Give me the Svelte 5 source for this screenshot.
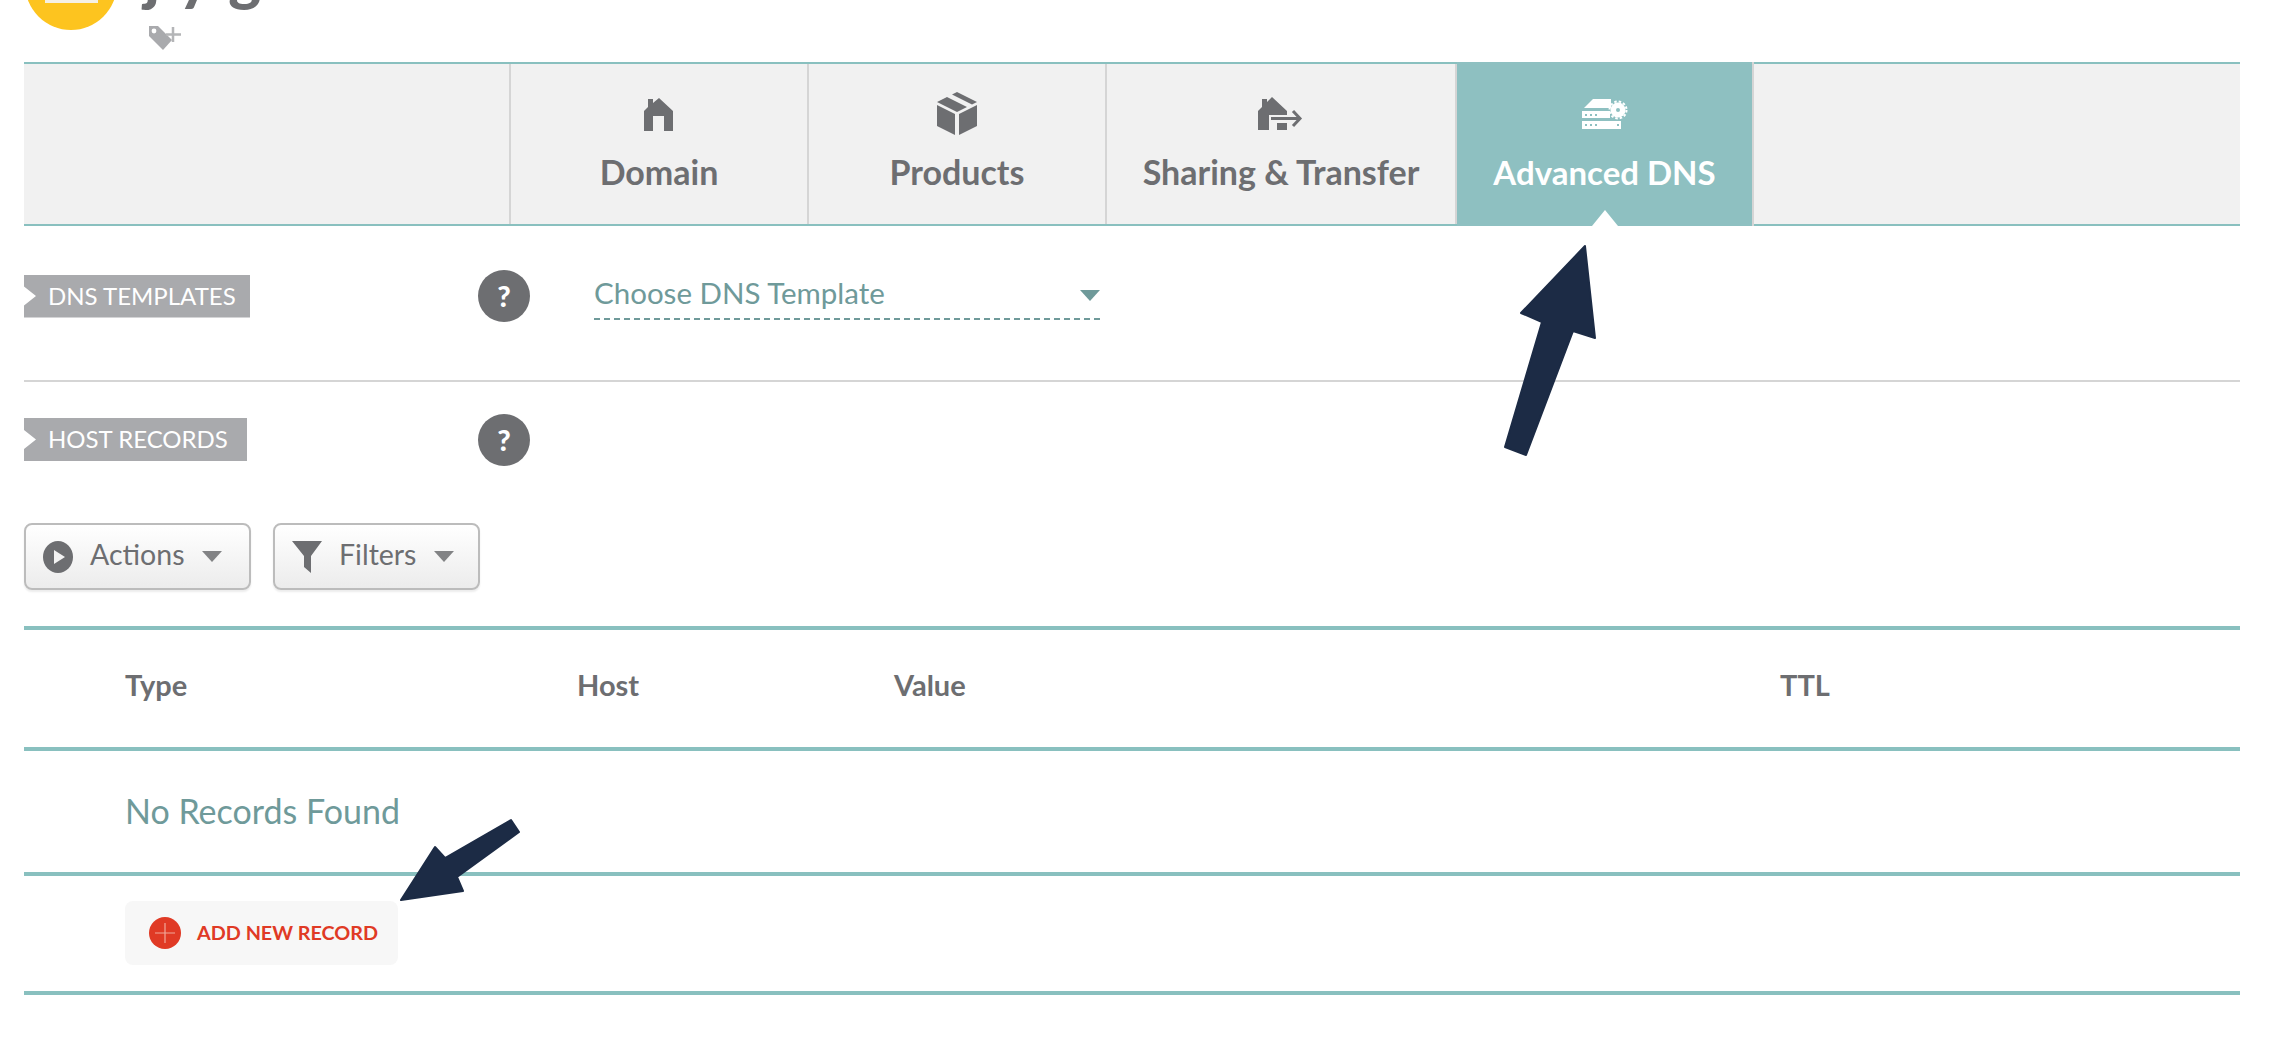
<script lang="ts">
	const tabs = [
		{ label: 'Domain', icon: 'home' },
		{ label: 'Products', icon: 'box' },
		{ label: 'Sharing & Transfer', icon: 'share' },
		{ label: 'Advanced DNS', icon: 'dns', active: true }
	];
	const columns = ['Type', 'Host', 'Value', 'TTL'];
</script>

<div class="page">
	<header class="head">
		<div class="avatar"><span class="avatar-bar"></span></div>
		<div class="title">jyg</div>
		<svg class="tag" viewBox="0 0 34 26" width="34" height="26">
			<path d="M1 1h9l14 14-9 10L1 11z" fill="#a9aaad" />
			<circle cx="6" cy="6" r="2.4" fill="#fff" />
			<path d="M25 2v15M18 9.500h15" stroke="#b4b5b7" stroke-width="2.500" fill="none" />
		</svg>
	</header>

	<nav class="tabs">
		<div class="tabs-spacer"></div>
		{#each tabs as tab}
			<div class="tab" class:active={tab.active}>
				<svg class="tab-icon" viewBox="0 0 48 40" width="48" height="40">
					{#if tab.icon === 'home'}
						<path d="M24 4L38 17V37H29V22H18V37H9V17L13 13V5H18V9z" />
					{:else if tab.icon === 'box'}
						<path d="M24-2L44 8 39 10.500 19 .5zM14 3L34 13 24 18 4 8zM4 11L22 20V41L4 32zM26 20L44 11V32L26 41z" />
					{:else if tab.icon === 'share'}
						<path d="M15 3L30 17V21H12V36H1V17L5 13V5H10V8zM20 29H30V36H20z" />
						<path d="M14 24.500H42M36 17L43 24.500 36 32" class="stroked" />
					{:else}
						<g transform="translate(1,5)">
							<path d="M11 0H29V9H2z" />
							<circle cx="36" cy="11" r="7.500" />
							<circle cx="36" cy="11" r="8.500" class="teeth" />
							<circle cx="36" cy="11" r="2" class="hole" />
							<path d="M0 12H28V19H0zM0 22H39V30H0z" />
							<path d="M3 15h2v2H3zM8 15h2v2H8zM13 15h2v2H13zM3 25h2v2H3zM8 25h2v2H8zM13 25h2v2H13zM35 25h2v2H35z" class="hole" />
						</g>
					{/if}
				</svg>
				<span>{tab.label}</span>
			</div>
		{/each}
	</nav>

	<section class="row dns-row">
		<div class="ribbon wide">DNS TEMPLATES</div>
		<div class="help">?</div>
		<div class="select">
			<span>Choose DNS Template</span>
			<i class="caret teal"></i>
		</div>
	</section>

	<section class="row host-row">
		<div class="ribbon">HOST RECORDS</div>
		<div class="help">?</div>
	</section>

	<div class="buttons">
		<button class="btn actions">
			<svg viewBox="0 0 30 32" width="30" height="32">
				<ellipse cx="15" cy="16" rx="15" ry="16" fill="#6d6e71" />
				<path d="M11 9l11 7-11 7z" fill="#f3f3f3" />
			</svg>
			<span>Actions</span>
			<i class="caret"></i>
		</button>
		<button class="btn filters">
			<svg viewBox="0 0 30 32" width="30" height="32">
				<path d="M0 0h30L19 15v17l-7-6V15z" fill="#6d6e71" />
			</svg>
			<span>Filters</span>
			<i class="caret"></i>
		</button>
	</div>

	<div class="table">
		<div class="thead">
			{#each columns as col}
				<div>{col}</div>
			{/each}
		</div>
		<div class="empty">No Records Found</div>
		<div class="add-row">
			<button class="add">
				<span class="plus">
					<svg viewBox="0 0 20 20" width="20" height="20">
						<path d="M10 0v20M0 10h20" stroke="#f0a79a" stroke-width="1.200" />
					</svg>
				</span>
				<span class="add-label">ADD NEW RECORD</span>
			</button>
		</div>
	</div>

	<!-- annotation arrows drawn over the screenshot -->
	<svg class="arrows" viewBox="0 0 2278 1052" width="2278" height="1052">
		<path
			d="M1585 246L1595 338 1573 331 1526 455 1505 447 1542 322 1521 313z"
			fill="#1c2b45" stroke="#1c2b45" stroke-width="2" stroke-linejoin="round"
		/>
		<path
			d="M401 900L435 847 445 858 511 820 519 832 457 877 463 891z"
			fill="#1c2b45" stroke="#1c2b45" stroke-width="2" stroke-linejoin="round"
		/>
	</svg>
</div>

<style>
	:global(body) {
		margin: 0;
		background: #fff;
	}

	.page {
		position: relative;
		width: 2278px;
		height: 1052px;
		overflow: hidden;
		box-sizing: border-box;
		padding: 0 38px 0 24px;
		font-family: Lato, 'Open Sans', sans-serif;
		color: #6d6e71;
	}

	.head {
		position: relative;
		height: 62px;
	}

	.avatar {
		position: absolute;
		left: 1px;
		top: -62px;
		width: 92px;
		height: 92px;
		border-radius: 50%;
		background: #fdc41f;
		display: flex;
		justify-content: center;
		align-items: flex-end;
	}

	.avatar-bar {
		width: 53px;
		height: 5px;
		margin-bottom: 27px;
		background: #f5f0e4;
	}

	.title {
		position: absolute;
		left: 120px;
		top: -46px;
		font-size: 62px;
		font-weight: 900;
		line-height: 42px;
		letter-spacing: 18px;
		color: #6d6e71;
	}

	.tag {
		position: absolute;
		left: 124px;
		top: 25px;
	}

	.tabs {
		display: flex;
		height: 164px;
		box-sizing: border-box;
		border-top: 2px solid #89c0bf;
		border-bottom: 2px solid #89c0bf;
		background: #f1f1f1;
	}

	.tabs-spacer {
		width: 485px;
		border-right: 2px solid #d5d5d5;
	}

	.tab {
		position: relative;
		display: flex;
		flex-direction: column;
		align-items: center;
		padding: 30px 0 0;
		box-sizing: border-box;
		border-right: 2px solid #d5d5d5;
		font-size: 34px;
		font-weight: 700;
		white-space: nowrap;
	}

	.tab:nth-child(2),
	.tab:nth-child(3) {
		width: 298px;
	}

	.tab:nth-child(4) {
		width: 350px;
	}

	.tab span {
		margin-top: 18px;
		line-height: 40px;
	}

	.tab-icon {
		flex: none;
		overflow: visible;
		fill: #6d6e71;
	}

	.tab-icon .stroked {
		fill: none;
		stroke: #6d6e71;
		stroke-width: 3;
	}

	.tab.active {
		width: 297px;
		margin-top: -2px;
		margin-bottom: -2px;
		padding-top: 32px;
		background: #8ec0c1;
		color: #fff;
		font-size: 33px;
	}

	.tab.active .tab-icon {
		fill: #fff;
	}

	.tab.active .tab-icon .hole {
		fill: #8ec0c1;
	}

	.tab.active .tab-icon .teeth {
		fill: none;
		stroke: #fff;
		stroke-width: 2;
		stroke-dasharray: 2.500 2;
	}

	.tab.active::after {
		content: '';
		position: absolute;
		left: 50%;
		bottom: 0;
		margin-left: -13px;
		border: 13px solid transparent;
		border-top: 0;
		border-bottom: 16px solid #fff;
	}

	.row {
		display: flex;
		align-items: center;
		box-sizing: border-box;
	}

	.dns-row {
		height: 156px;
		padding-bottom: 14px;
		border-bottom: 2px solid #d5d5d5;
	}

	.host-row {
		height: 115px;
	}

	.ribbon {
		width: 223px;
		height: 43px;
		box-sizing: border-box;
		padding-left: 24px;
		background: #a9aaad;
		clip-path: polygon(0 0, 100% 0, 100% 100%, 0 100%, 0 72%, 12px 50%, 0 28%);
		color: #fff;
		font-size: 24px;
		line-height: 41px;
		white-space: nowrap;
	}

	.ribbon.wide {
		width: 226px;
	}

	.help {
		width: 52px;
		height: 52px;
		margin-left: 231px;
		border-radius: 50%;
		background: #6d6e71;
		color: #fff;
		font-size: 29px;
		font-weight: 900;
		line-height: 52px;
		text-align: center;
	}

	.dns-row .help {
		margin-left: 228px;
	}

	.select {
		display: flex;
		justify-content: space-between;
		align-items: center;
		width: 506px;
		height: 46px;
		margin-left: 64px;
		border-bottom: 2px dashed #6f9a9a;
		color: #6f9a9a;
		font-size: 29.500px;
	}

	.select span {
		margin-bottom: 6px;
	}

	.caret {
		width: 0;
		height: 0;
		border: 10px solid transparent;
		border-top: 11px solid #6d6e71;
		border-bottom: 0;
		opacity: 0.85;
	}

	.caret.teal {
		border-top-color: #6f9a9a;
		opacity: 1;
	}

	.buttons {
		display: flex;
		gap: 22px;
		margin-top: 26px;
	}

	.btn {
		display: flex;
		align-items: center;
		height: 67px;
		box-sizing: border-box;
		border: 2px solid #bcbcbc;
		border-radius: 8px;
		background: linear-gradient(#fff, #ececec);
		box-shadow: 0 2px 2px rgba(0, 0, 0, 0.08);
		color: #6d6e71;
		font-family: inherit;
		font-size: 28.500px;
		padding: 0 0 0 17px;
	}

	.actions {
		width: 227px;
	}

	.filters {
		width: 207px;
	}

	.btn span {
		margin: 0 18px 6px 17px;
	}

	.table {
		margin-top: 36px;
	}

	.thead {
		display: grid;
		grid-template-columns: 452px 317px 886px 1fr;
		align-items: center;
		height: 125px;
		box-sizing: border-box;
		padding: 0 0 9px 101px;
		border-top: 4px solid #89c0bf;
		border-bottom: 4px solid #89c0bf;
		font-size: 29px;
		font-weight: 700;
	}

	.empty {
		display: flex;
		align-items: center;
		height: 125px;
		box-sizing: border-box;
		padding: 0 0 2px 101px;
		border-bottom: 4px solid #89c0bf;
		color: #6f9a9a;
		font-size: 34px;
	}

	.add-row {
		height: 119px;
		box-sizing: border-box;
		padding: 25px 0 0 101px;
		border-bottom: 4px solid #89c0bf;
	}

	.add {
		display: flex;
		align-items: center;
		gap: 16px;
		width: 273px;
		height: 64px;
		box-sizing: border-box;
		padding: 0 0 0 24px;
		border: 0;
		border-radius: 8px;
		background: #f7f7f7;
		color: #e03a25;
		font-family: inherit;
		font-size: 19.800px;
		font-weight: 700;
		white-space: nowrap;
	}

	.add-label {
		margin-bottom: 2px;
	}

	.plus {
		display: flex;
		align-items: center;
		justify-content: center;
		width: 32px;
		height: 32px;
		border-radius: 50%;
		background: #e03a25;
	}

	.arrows {
		position: absolute;
		left: 0;
		top: 0;
		pointer-events: none;
	}
</style>
